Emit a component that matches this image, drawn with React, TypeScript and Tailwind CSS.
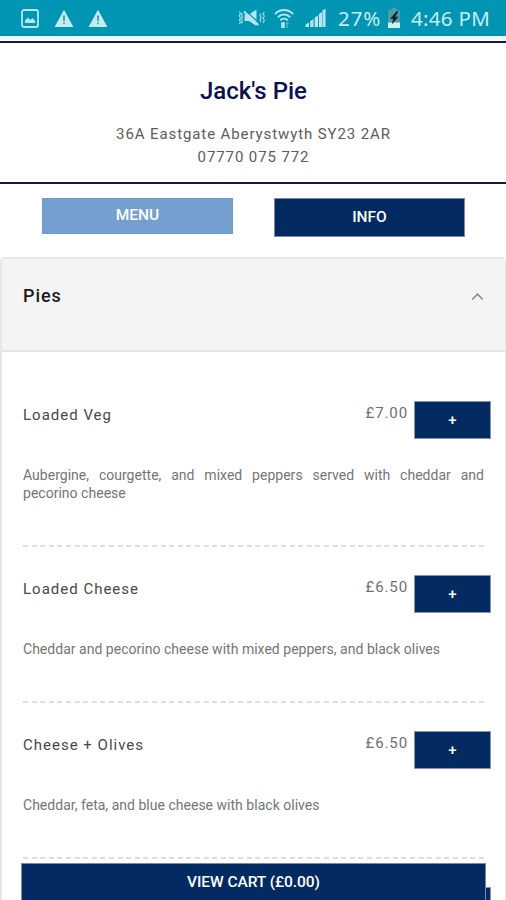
type MenuItem = { name: string; price: string; description: string };

const items: MenuItem[] = [
  {
    name: 'Loaded Veg',
    price: '£7.00',
    description: 'Aubergine, courgette, and mixed peppers served with cheddar and pecorino cheese',
  },
  {
    name: 'Loaded Cheese',
    price: '£6.50',
    description: 'Cheddar and pecorino cheese with mixed peppers, and black olives',
  },
  {
    name: 'Cheese + Olives',
    price: '£6.50',
    description: 'Cheddar, feta, and blue cheese with black olives',
  },
];

function PictureIcon() {
  return (
    <svg width="18" height="19" viewBox="0 0 18 19" fill="none">
      <rect x="1" y="1" width="16" height="17" rx="2" stroke="#b5e6ee" strokeWidth="1.8" />
      <path d="M4 14v-2.5l3-3 2.2 2.4L11.5 9l2.7 2.8V14z" fill="#b5e6ee" />
    </svg>
  );
}

function WarningIcon() {
  return (
    <svg width="20" height="19" viewBox="0 0 20 19">
      <path d="M10 .8 19.4 18H.6z" fill="#c3ebf2" />
      <path d="M8.9 6.5h2.2l-.4 5.8H9.3z M9.2 13.6h1.6v1.7H9.2z" fill="#3a9cab" />
    </svg>
  );
}

function MuteIcon() {
  return (
    <svg width="28" height="18" viewBox="0 0 28 18" fill="none">
      <path d="M6.5 5.5H11l7.5-5V17L11 12H6.5z" fill="#b5e6ee" />
      <path d="M7.5 1.5 21 14" stroke="#0095b3" strokeWidth="1.2" />
      <path d="M6 2.5 20.5 16" stroke="#b5e6ee" strokeWidth="1.8" />
      <path
        d="M1.3 2.5l1.2 2-1.2 2 1.2 2.5-1.2 2 1.2 2-1.2 2M4.4 4l-1 2 1 2-1 2.5 1 2-1 2M23 4.5l-1 2 1 2-1 2.5 1 2M26.3 3l-1.2 2 1.2 2-1.2 2.5 1.2 2-1.2 2.5"
        stroke="#9bdce7"
        strokeWidth="1.2"
      />
    </svg>
  );
}

function WifiIcon() {
  return (
    <svg width="20" height="21" viewBox="0 0 20 21" fill="none">
      <path
        d="M1 6C6 .7 14 .7 19 6M3.8 9.2c3.6-3.6 8.800-3.600 12.400 0M6.300 12.200c2.100-2.100 5.300-2.100 7.400 0"
        stroke="#b5e6ee"
        strokeWidth="2"
      />
      <path d="M7.200 14.200h3.600V20H7.200z" fill="#b5e6ee" />
      <path d="M13.300 20v-5M11.800 16.500l1.500-2 1.500 2" stroke="#4bbdd0" strokeWidth="1.2" />
    </svg>
  );
}

function SignalIcon() {
  return (
    <svg width="21" height="20" viewBox="0 0 21 20" fill="#b5e6ee">
      <path d="M.5 16.500l3.500-2V19H.5zM5.200 13l3.300-2v8H5.200zM9.700 9.500l3.300-2V19H9.700zM13.900 6 17 4v15h-3.100zM17.500 2.500 20.500 .5V19h-3z" />
    </svg>
  );
}

function BatteryIcon() {
  return (
    <svg width="14" height="20" viewBox="0 0 14 20">
      <path d="M4.500 0h5v2H13v18H1V2h3.500z" fill="#4d9da8" />
      <path d="M1 14.500h12V20H1z" fill="#d2f1f5" />
      <path d="M9.800 3 3 10.800h3.200L4.800 16.500 11.400 8.800H8.200l3.200-5.300z" fill="#10242c" />
    </svg>
  );
}

function StatusBar() {
  return (
    <div className="flex h-9 shrink-0 items-center bg-[#0095b3] font-['Noto_Sans',sans-serif] text-[20.5px] text-[#c6edf3]">
      <div className="ml-[21px] flex gap-[14.500px]">
        <PictureIcon />
        <WarningIcon />
        <WarningIcon />
      </div>
      <div className="ml-auto mr-[15px] flex items-center">
        <MuteIcon />
        <div className="ml-2"><WifiIcon /></div>
        <div className="ml-[11px]"><SignalIcon /></div>
        <span className="ml-[12px] w-[45px] whitespace-nowrap tracking-[0.9px]">27%</span>
        <div className="ml-[4px]"><BatteryIcon /></div>
        <span className="ml-[10px] w-[80px] whitespace-nowrap tracking-[0.3px]">4:46 PM</span>
      </div>
    </div>
  );
}

function ItemRow({ item }: { item: MenuItem }) {
  return (
    <li className="ml-[21px] mr-[14px]">
      <div className="flex h-[93px] items-start pt-[28px]">
        <h3 className="mt-[5px] text-[15px] leading-[19px] tracking-[1px] text-[#484848]">{item.name}</h3>
        <span className="ml-auto mt-[3px] text-[15px] leading-[18px] tracking-[0.9px] text-[#707070]">
          {item.price}
        </span>
        <button className="ml-[6px] flex h-[38px] w-[77px] items-center justify-center border-[1.5px] border-[#8b94a5] bg-[#032b62] text-[15px] font-medium text-white">
          +
        </button>
      </div>
      <p className="mr-[7px] text-justify text-[14px] leading-[18px] tracking-[0.02px] text-[#757575]">
        {item.description}
      </p>
      <div className="mr-[7px] mt-[43px] h-[2px] bg-[repeating-linear-gradient(90deg,#dedede_0_5px,transparent_5px_8.6px)]" />
    </li>
  );
}

export default function App() {
  return (
    <div className="relative flex h-[900px] w-[506px] flex-col overflow-hidden bg-white font-[Roboto,sans-serif]">
      <StatusBar />
      <div className="h-1 shrink-0 bg-[#eefafb]" />
      <header className="mt-px flex h-[143px] shrink-0 flex-col items-center border-y-2 border-[#1c1845] pt-[34px]">
        <h1 className="pl-px text-[24px] font-medium leading-[28px] text-[#0b1152]">Jack's Pie</h1>
        <p className="mt-[18px] pl-px text-[15px] leading-[23px] tracking-[0.9px] text-[#5c5c5c]">
          36A Eastgate Aberystwyth SY23 2AR
        </p>
        <p className="pl-px text-[15px] leading-[23px] tracking-[0.9px] text-[#5c5c5c]">07770 075 772</p>
      </header>
      <nav className="flex h-[73px] shrink-0 items-start justify-between pl-[42px] pr-[41px] pt-[14px] text-[15.5px] font-medium">
        <button className="h-[36px] w-[191px] border border-[#6b9bd0] bg-[#759fcf] text-white">MENU</button>
        <button className="h-[39px] w-[191px] border-[1.5px] border-[#7f899c] bg-[#032b62] text-white">INFO</button>
      </nav>
      <section className="flex-1 rounded-t-[5px] border-2 border-b-0 border-r border-[#e6e6e6]">
        <div className="flex h-[93px] justify-between border-b-2 border-[#e4e4e4] bg-[#f4f4f4] pl-[21px] pr-[21px] pt-[26px]">
          <h2 className="text-[18px] font-medium leading-[22px] tracking-[0.9px] text-[#1a1a1a]">Pies</h2>
          <svg className="mt-[7px]" width="13" height="9" viewBox="0 0 13 9" fill="none">
            <path d="M1.200 7.500 6.500 2.200l5.300 5.300" stroke="#8a8a8a" strokeWidth="1.6" />
          </svg>
        </div>
        <ul className="pt-[21px]">
          {items.map((item) => (
            <ItemRow key={item.name} item={item} />
          ))}
        </ul>
        <div className="ml-auto mr-[14px] mt-[28px] h-[38px] w-[77px] border-[1.5px] border-[#8b94a5] bg-[#032b62]" />
      </section>
      <button className="absolute left-[21px] top-[863px] h-[39px] w-[465px] border-[1.5px] border-[#7f899c] bg-[#032b62] text-[15.5px] font-medium tracking-[-0.05px] text-white">
        VIEW CART (£0.00)
      </button>
    </div>
  );
}
